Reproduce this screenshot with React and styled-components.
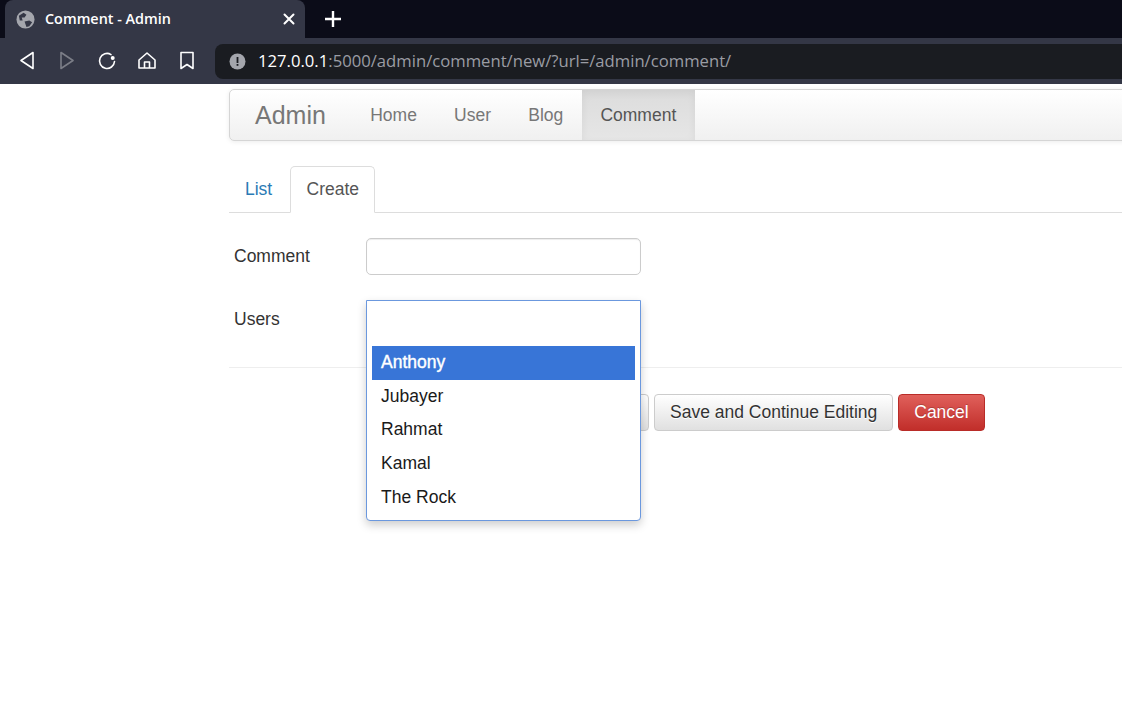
import React from "react";
import styled, { createGlobalStyle } from "styled-components";

const Global = createGlobalStyle`
  html, body { margin: 0; padding: 0; background: #fff; }
  body { width: 1122px; height: 702px; overflow: hidden; font-family: "Liberation Sans", Arial, sans-serif; }
  * { box-sizing: border-box; }
`;

const Browser = styled.div`width: 1122px; height: 702px; overflow: hidden; display: flex; flex-direction: column;`;
const TabStrip = styled.div`height: 38px; background: #0b0c18; display: flex; align-items: stretch; padding-left: 5px; flex: none;`;
const Tab = styled.div`
  width: 300px; background: #343746; border-radius: 8px 8px 0 0; display: flex; align-items: center;
  padding: 0 6px 0 11px; gap: 10px; color: #fff; font: 600 14.4px "Open Sans", sans-serif;
`;
const TabTitle = styled.span`flex: 1; white-space: nowrap; padding-bottom: 2px;`;
const NewTab = styled.div`width: 56px; display: flex; align-items: center; justify-content: center;`;
const Toolbar = styled.div`height: 46px; background: #343746; display: flex; align-items: center; padding: 0 0 0 7px; flex: none;`;
const ToolButton = styled.div`width: 40px; height: 36px; display: flex; align-items: center; justify-content: center; opacity: ${p => (p.$dim ? 0.35 : 1)};`;
const UrlBar = styled.div`
  flex: 1; height: 35px; margin-left: 8px; background: #1a1c21; border-radius: 8px 0 0 8px; display: flex; align-items: center;
  padding-left: 14px; gap: 12px; font: 16.67px "Open Sans", sans-serif; color: #9a9ca4; white-space: nowrap;
`;
const UrlText = styled.span`padding-bottom: 2px;`;
const Host = styled.span`color: #fff;`;

const Page = styled.div`flex: 1; padding: 5px 0 0 229px; position: relative; overflow: hidden; font-size: 17.5px; color: #333;`;
const Navbar = styled.nav`
  width: 1000px; height: 52px; display: flex; align-items: stretch; border: 1px solid #d5d5d5; border-radius: 5px;
  background: linear-gradient(to bottom, #fff 0%, #f0f0f0 100%); box-shadow: 0 1px 5px rgba(0,0,0,.08);
`;
const Brand = styled.div`width: 121.6px; padding-left: 25px; font-size: 25px; line-height: 50px; color: #777;`;
const NavItem = styled.div`
  padding: 0 18.6px; line-height: 50px; color: ${p => (p.$active ? "#555" : "#777")};
  background: ${p => (p.$active ? "linear-gradient(to bottom, #dcdcdc, #e6e6e6)" : "none")};
  box-shadow: ${p => (p.$active ? "inset 0 3px 9px rgba(0,0,0,.06)" : "none")};
`;
const Tabs = styled.div`margin-top: 25px; height: 47px; width: 1000px; border-bottom: 1px solid #ddd; display: flex; align-items: stretch;`;
const ListTab = styled.div`width: 61px; padding: 12px 0 0 16px; color: #2a7ab5; line-height: 22px;`;
const ActiveTab = styled.div`
  width: 85px; height: 47px; padding: 11px 0 0 15.5px; line-height: 22px; color: #555; background: #fff;
  border: 1px solid #ddd; border-bottom-color: #fff; border-radius: 5px 5px 0 0;
`;
const Form = styled.div`margin: 25px 0 0;`;
const FormRow = styled.div`display: flex; align-items: flex-start; padding-left: 5px; height: ${p => p.$h}px;`;
const Label = styled.label`width: 132px; line-height: 22px; padding-top: ${p => p.$top}px; color: #333;`;
const Input = styled.div`width: 275px; height: 37px; border: 1px solid #ccc; border-radius: 5px; background: #fff; box-shadow: inset 0 1px 1px rgba(0,0,0,.075);`;
const Select = styled.div`position: relative; width: 275px;`;
const Dropdown = styled.div`
  position: absolute; z-index: 2; left: 0; top: 0; width: 275px; height: 221px; background: #fff;
  border: 1px solid #6b98de; border-radius: 0 0 4px 4px; padding: 45px 5px 0; box-shadow: 0 4px 10px rgba(0,0,0,.2);
`;
const Option = styled.div`
  height: 33.7px; line-height: 33px; padding-left: 9px; color: ${p => (p.$on ? "#fff" : "#1a1a1a")};
  background: ${p => (p.$on ? "#3875d7" : "transparent")};
  -webkit-text-stroke: ${p => (p.$on ? "0.4px #fff" : "0")};
`;
const Divider = styled.hr`width: 1000px; margin: 0; border: 0; border-top: 1px solid #eee;`;
const Actions = styled.div`margin: 26px 0 0 137px; display: flex; gap: 5px; white-space: nowrap;`;
const Button = styled.div`
  height: 37px; line-height: 35px; padding: 0 15px; border-radius: 4px; text-align: center; width: ${p => p.$w}px;
  ${p => p.$danger
    ? "color:#fff;border:1px solid #b92c28;background:linear-gradient(to bottom,#e0605b,#c12e2a);text-shadow:0 -1px 0 rgba(0,0,0,.2);"
    : "color:#333;border:1px solid #ccc;background:linear-gradient(to bottom,#fff,#e0e0e0);text-shadow:0 1px 0 #fff;"}
`;

const Stroke = ({ size = 20, children, color = "#fff", width = 1.6 }) => (
  <svg width={size} height={size} viewBox="0 0 20 20" fill="none" stroke={color} strokeWidth={width} strokeLinejoin="round" strokeLinecap="round">{children}</svg>
);

export default function App() {
  return (
    <Browser>
      <Global />
      <TabStrip>
        <Tab>
          <svg width="19" height="19" viewBox="0 0 20 20">
            <circle cx="10" cy="10" r="9.5" fill="#a4a6ad" />
            <path d="M3 6 L8 3 L11 5 L9 8 L6 8 L7 11 L4 11 Z M9 12 L14 11 L17 13 L14 17 L11 18 L10 15 Z" fill="#343746" />
          </svg>
          <TabTitle>Comment - Admin</TabTitle>
          <Stroke size={20} width={2}><path d="M5.5 5.5 L14.5 14.5 M14.5 5.5 L5.5 14.5" /></Stroke>
        </Tab>
        <NewTab>
          <svg width="16" height="16" viewBox="0 0 16 16" stroke="#fff" strokeWidth="2.4"><path d="M8 0 V16 M0 8 H16" /></svg>
        </NewTab>
      </TabStrip>
      <Toolbar>
        <ToolButton><Stroke><path d="M16 1.5 L4 9.5 L16 17.5 Z" /></Stroke></ToolButton>
        <ToolButton $dim><Stroke><path d="M4 1.5 L16 9.5 L4 17.5 Z" /></Stroke></ToolButton>
        <ToolButton>
          <Stroke><path d="M14 3.6 A7.5 7.5 0 1 0 17.5 10.5" /><circle cx="15.7" cy="7" r="1.2" fill="#fff" /></Stroke>
        </ToolButton>
        <ToolButton>
          <Stroke><path d="M2 9 L10 2 L18 9 V17 H2 Z M7.5 17 V11 H12.5 V17" /></Stroke>
        </ToolButton>
        <ToolButton><Stroke><path d="M4 1.5 H16 V17.5 L10 13.5 L4 17.5 Z" /></Stroke></ToolButton>
        <UrlBar>
          <svg width="17" height="17" viewBox="0 0 17 17">
            <circle cx="8.5" cy="8.5" r="8" fill="#a4a6ad" />
            <rect x="7.6" y="4" width="1.8" height="6" fill="#1a1c21" />
            <rect x="7.6" y="11" width="1.8" height="1.8" fill="#1a1c21" />
          </svg>
          <UrlText><Host>127.0.0.1</Host>:5000/admin/comment/new/?url=/admin/comment/</UrlText>
        </UrlBar>
      </Toolbar>
      <Page>
        <Navbar>
          <Brand>Admin</Brand>
          <NavItem>Home</NavItem>
          <NavItem>User</NavItem>
          <NavItem>Blog</NavItem>
          <NavItem $active>Comment</NavItem>
        </Navbar>
        <Tabs>
          <ListTab>List</ListTab>
          <ActiveTab>Create</ActiveTab>
        </Tabs>
        <Form>
          <FormRow $h={62}>
            <Label $top={7}>Comment</Label>
            <Input />
          </FormRow>
          <FormRow $h={67}>
            <Label $top={8}>Users</Label>
            <Select>
              <Dropdown>
                <Option $on>Anthony</Option>
                <Option>Jubayer</Option>
                <Option>Rahmat</Option>
                <Option>Kamal</Option>
                <Option>The Rock</Option>
              </Dropdown>
            </Select>
          </FormRow>
          <Divider />
          <Actions>
            <Button $w={66} />
            <Button $w={212} />
            <Button $w={239}>Save and Continue Editing</Button>
            <Button $w={87} $danger>Cancel</Button>
          </Actions>
        </Form>
      </Page>
    </Browser>
  );
}
